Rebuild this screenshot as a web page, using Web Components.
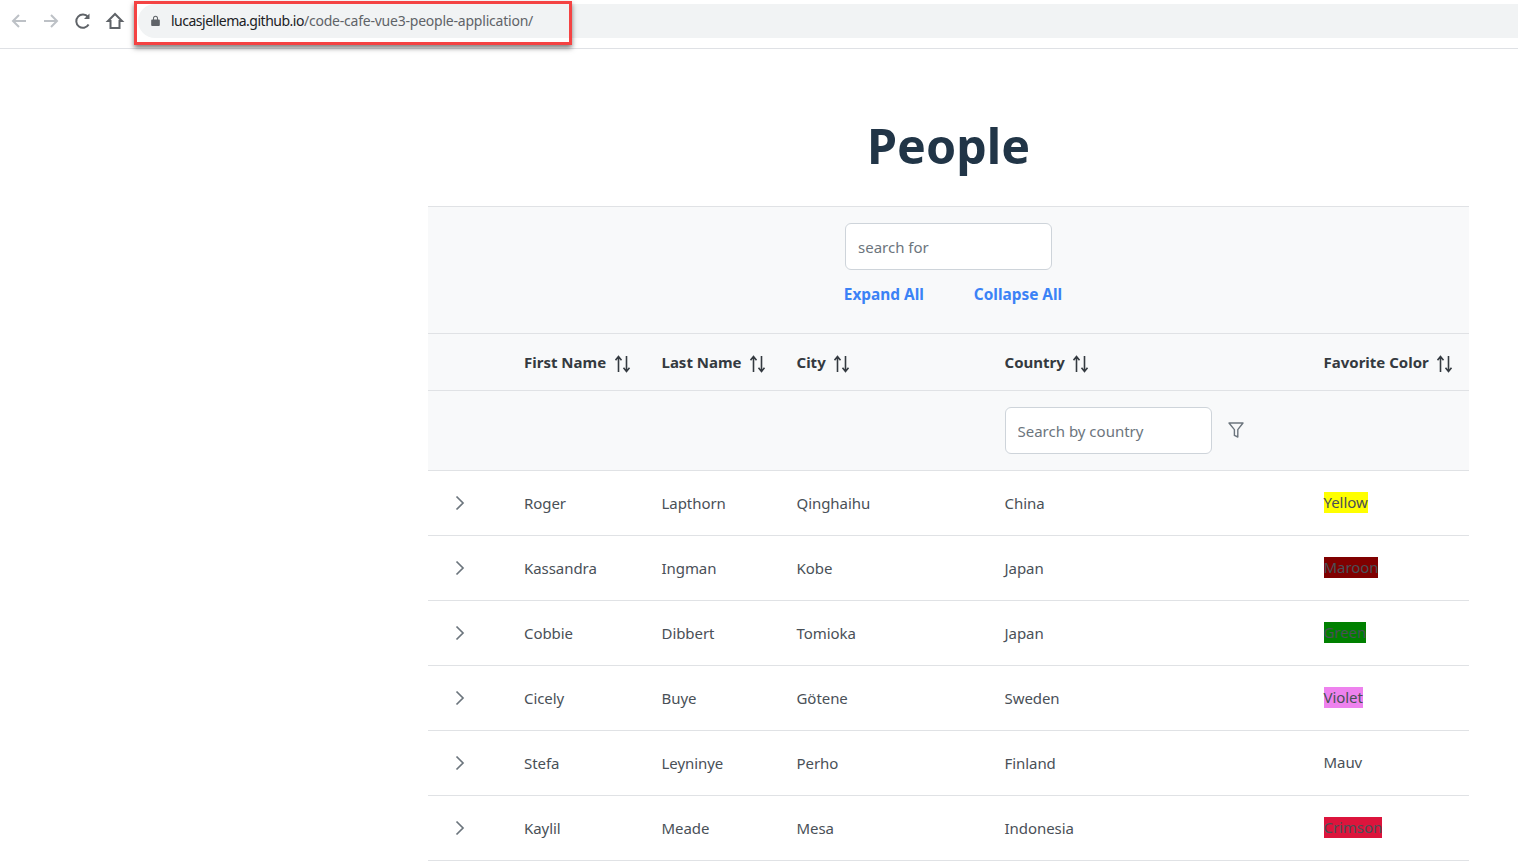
<!DOCTYPE html>
<html lang="en">
<head>
<meta charset="utf-8">
<title>People</title>
<style>
  html, body { margin: 0; padding: 0; background: #fff; }
  body { font-family: "Noto Sans", "Open Sans", sans-serif; height: 865px; overflow: hidden; }
</style>
</head>
<body>
<browser-bar url-host="lucasjellema.github.io" url-path="/code-cafe-vue3-people-application/"></browser-bar>
<people-page></people-page>

<script>
// chrome on top of the page, with the red marker round the url
class BrowserBar extends HTMLElement {
  connectedCallback() {
    this.attachShadow({ mode: 'open' });
    this.shadowRoot.innerHTML = `
    <style>
      :host { display: flex; align-items: center; height: 42px; border-bottom: 1px solid #dfe1e5; position: relative; padding-bottom: 6px; }
      .btns { display: flex; align-items: center; gap: 12px; padding-left: 9px; width: 131px; box-sizing: border-box; flex: none; }
      svg { display: block; flex: none; }
      .addr { flex: 1; height: 34px; margin-left: 7px; background: #f1f3f4; border-radius: 17px 0 0 17px; display: flex; align-items: center; padding: 0 0 2px 13px; box-sizing: border-box; font: 14px "Noto Sans", sans-serif; color: #5f6368; letter-spacing: -.22px; }
      .addr b { font-weight: 400; color: #202124; letter-spacing: -.5px; }
      .addr svg { margin-right: 11px; }
      .mark { position: absolute; left: 134px; top: 1px; width: 438px; height: 44px; box-sizing: border-box; border: 3px solid #f44343; box-shadow: 0 3px 5px rgba(0,0,0,.5); pointer-events: none; }
    </style>
    <div class="btns">
      <svg width="20" height="20" viewBox="0 0 20 20" fill="none" stroke="#bdc1c6" stroke-width="2"><path d="M17 10H4M10 4l-6 6 6 6"/></svg>
      <svg width="20" height="20" viewBox="0 0 20 20" fill="none" stroke="#bdc1c6" stroke-width="2"><path d="M3 10h13M10 4l6 6-6 6"/></svg>
      <svg width="20" height="20" viewBox="0 0 20 20" fill="none" stroke="#5f6368" stroke-width="2"><path d="M15.6 13.5A6.6 6.6 0 1 1 15 6"/><path d="M16.5 2.5v5.5h-5.5" fill="#5f6368" stroke="none"/></svg>
      <svg width="20" height="20" viewBox="0 0 20 20" fill="none" stroke="#5f6368" stroke-width="2"><path d="M10 3 3 10h2.5v7h9v-7H17z" stroke-linejoin="miter"/></svg>
    </div>
    <div class="addr">
      <svg width="9" height="11" viewBox="0 0 10 12"><path fill="#5f6368" d="M1.2 5h7.6a1 1 0 0 1 1 1v5a1 1 0 0 1-1 1H1.2a1 1 0 0 1-1-1V6a1 1 0 0 1 1-1zM2.2 5V3.4a2.8 2.8 0 0 1 5.6 0V5H6.7V3.4a1.7 1.7 0 0 0-3.4 0V5z"/></svg>
      <span><b>${this.getAttribute('url-host')}</b>${this.getAttribute('url-path')}</span>
    </div>
    <div class="mark"></div>`;
  }
}
customElements.define('browser-bar', BrowserBar);

class SortIcon extends HTMLElement {
  connectedCallback() {
    this.attachShadow({ mode: 'open' });
    this.shadowRoot.innerHTML = `
    <style>:host { display: inline-block; width: 16px; height: 18px; margin: 3px 0 0 8.5px; flex: none; } svg { display: block; }</style>
    <svg width="16" height="18" viewBox="0 0 16 18" fill="none" stroke="#343a40" stroke-width="1.6"><path d="M3.5 17V2M.5 5.2l3-3.6 3 3.6M11.5 1v15M8.5 12.8l3 3.6 3-3.6"/></svg>`;
  }
}
customElements.define('sort-icon', SortIcon);

class SearchBox extends HTMLElement {
  connectedCallback() {
    this.attachShadow({ mode: 'open' });
    this.shadowRoot.innerHTML = `
    <style>
      :host { display: block; width: 207px; }
      input { display: block; width: 100%; height: 47px; box-sizing: border-box; border: 1px solid #ced4da; border-radius: 6px; background: #fff; padding: 0 12px; font: 15px "Noto Sans", sans-serif; color: #495057; outline: none; }
      input::placeholder { color: #6c757d; opacity: 1; }
    </style>
    <input type="text" placeholder="${this.getAttribute('placeholder')}">`;
  }
}
customElements.define('search-box', SearchBox);

class PeopleToolbar extends HTMLElement {
  connectedCallback() {
    this.attachShadow({ mode: 'open' });
    this.shadowRoot.innerHTML = `
    <style>
      :host { display: flex; flex-direction: column; align-items: center; height: 128px; box-sizing: border-box; padding-top: 16px; background: #f8f9fa; border-top: 1px solid #e0e2e5; border-bottom: 1px solid #e0e2e5; }
      .links { display: flex; gap: 50px; margin-top: 14px; margin-left: 9px; }
      a { color: #3b82f6; font-weight: 700; font-size: 15.4px; line-height: 22px; text-decoration: none; cursor: pointer; }
    </style>
    <search-box placeholder="search for"></search-box>
    <div class="links"><a>Expand All</a><a>Collapse All</a></div>`;
  }
}
customElements.define('people-toolbar', PeopleToolbar);

const COLS = '80px 137.5px 135px 208px 319px 161.5px';

class HeaderRow extends HTMLElement {
  connectedCallback() {
    this.attachShadow({ mode: 'open' });
    const names = ['First Name', 'Last Name', 'City', 'Country', 'Favorite Color'];
    this.shadowRoot.innerHTML = `
    <style>
      :host { display: grid; grid-template-columns: ${COLS}; align-items: center; height: 57px; box-sizing: border-box; background: #f8f9fa; border-bottom: 1px solid #e0e2e5; color: #343a40; font-weight: 700; font-size: 15px; }
      .c { display: flex; align-items: center; padding-left: 16px; white-space: nowrap; }
    </style>
    <div></div>
    ${names.map(n => `<div class="c"><span>${n}</span><sort-icon></sort-icon></div>`).join('')}`;
  }
}
customElements.define('header-row', HeaderRow);

class FilterRow extends HTMLElement {
  connectedCallback() {
    this.attachShadow({ mode: 'open' });
    this.shadowRoot.innerHTML = `
    <style>
      :host { display: grid; grid-template-columns: ${COLS}; align-items: center; height: 80px; box-sizing: border-box; background: #f8f9fa; border-bottom: 1px solid #e0e2e5; }
      .c { grid-column: 5; display: flex; align-items: center; padding-left: 16px; }
      svg { margin: 0 0 2px 16px; display: block; }
    </style>
    <div class="c">
      <search-box placeholder="Search by country"></search-box>
      <svg width="16" height="16" viewBox="0 0 16 16" fill="none" stroke="#6c757d" stroke-width="1.4" stroke-linejoin="round"><path d="M1 1h14L9.8 7.6V15l-3.4-1.6V7.6z"/></svg>
    </div>`;
  }
}
customElements.define('filter-row', FilterRow);

class PersonRow extends HTMLElement {
  connectedCallback() {
    this.attachShadow({ mode: 'open' });
    const color = this.getAttribute('swatch');
    this.shadowRoot.innerHTML = `
    <style>
      :host { display: grid; grid-template-columns: ${COLS}; align-items: center; height: 65px; box-sizing: border-box; border-bottom: 1px solid #e0e2e5; color: #495057; font-size: 15px; letter-spacing: -.06px; }
      .c { padding-left: 16px; white-space: nowrap; }
      .tog { padding-left: 27px; }
      svg { display: block; }
      mark { display: inline-block; line-height: 21px; vertical-align: top; margin-bottom: 2px; color: inherit; background: ${color || 'transparent'}; }
    </style>
    <div class="tog"><svg width="10" height="16" viewBox="0 0 10 16" fill="none" stroke="#6c757d" stroke-width="1.7"><path d="M1.5 1.5 8 8l-6.5 6.5"/></svg></div>
    <div class="c">${this.getAttribute('first')}</div>
    <div class="c">${this.getAttribute('last')}</div>
    <div class="c">${this.getAttribute('city')}</div>
    <div class="c">${this.getAttribute('country')}</div>
    <div class="c"><mark>${this.getAttribute('color')}</mark></div>`;
  }
}
customElements.define('person-row', PersonRow);

class PeoplePage extends HTMLElement {
  connectedCallback() {
    this.attachShadow({ mode: 'open' });
    const people = [
      ['Roger', 'Lapthorn', 'Qinghaihu', 'China', 'Yellow', 'yellow'],
      ['Kassandra', 'Ingman', 'Kobe', 'Japan', 'Maroon', 'maroon'],
      ['Cobbie', 'Dibbert', 'Tomioka', 'Japan', 'Green', 'green'],
      ['Cicely', 'Buye', 'Götene', 'Sweden', 'Violet', 'violet'],
      ['Stefa', 'Leyninye', 'Perho', 'Finland', 'Mauv', ''],
      ['Kaylil', 'Meade', 'Mesa', 'Indonesia', 'Crimson', 'crimson']
    ];
    this.shadowRoot.innerHTML = `
    <style>
      :host { display: block; width: 1041px; margin-left: 428px; }
      h1 { margin: 0; height: 157px; box-sizing: border-box; padding-top: 65px; text-align: center; font-size: 48.4px; line-height: 62px; font-weight: 700; color: #213547; }
    </style>
    <h1>People</h1>
    <people-toolbar></people-toolbar>
    <header-row></header-row>
    <filter-row></filter-row>
    ${people.map(p => `<person-row first="${p[0]}" last="${p[1]}" city="${p[2]}" country="${p[3]}" color="${p[4]}" swatch="${p[5]}"></person-row>`).join('')}`;
  }
}
customElements.define('people-page', PeoplePage);
</script>
</body>
</html>
